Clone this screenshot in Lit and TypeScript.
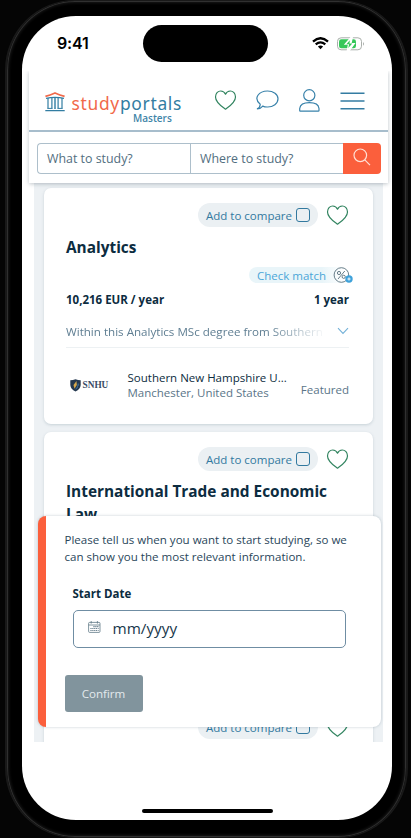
import { LitElement, html, css, svg, nothing } from "lit";
import { customElement, property } from "lit/decorators.js";

const heart = svg`<path d="M11 19.2C8.6 17.4 1 12.6 1 6.9C1 3.4 3.4 1 6.2 1C8.4 1 10.1 2.2 11 4.2C11.9 2.2 13.6 1 15.8 1C18.6 1 21 3.4 21 6.9C21 12.6 13.4 17.4 11 19.2Z" fill="none" stroke="#338561" stroke-width="1.2" stroke-linejoin="round"/>`;

@customElement("course-card")
export class CourseCard extends LitElement {
  @property() name = "";
  @property({ type: Boolean }) full = false;

  static styles = css`
    :host {
      display: block;
      flex: none;
      box-sizing: border-box;
      background: #fff;
      border-radius: 7px;
      padding: 15px 23.5px 0 22.5px;
      box-shadow: 0 1px 3px rgba(70, 100, 120, 0.22);
      font-family: "Open Sans", sans-serif;
      color: #0c2c40;
    }
    svg { display: block; flex: none; }
    .actions { display: flex; justify-content: flex-end; align-items: center; gap: 8px; height: 24px; }
    .compare {
      display: flex; align-items: center; justify-content: space-between; box-sizing: border-box;
      width: 120px; height: 24px; padding: 0 8px; border-radius: 12px;
      background: #ebf0f3; color: #32799f; font-size: 11.5px; line-height: 15px; white-space: nowrap;
    }
    .box { box-sizing: border-box; width: 14px; height: 14px; border: 1px solid #32799f; border-radius: 3px; }
    .title { margin: 9px 0 0; font-size: 15.4px; line-height: 23px; font-weight: 700; width: 280px; }
    .match { display: flex; justify-content: flex-end; height: 16px; margin-top: 8px; margin-right: -4px; }
    .pill {
      display: flex; align-items: center; justify-content: space-between; box-sizing: border-box;
      width: 104px; height: 16px; padding-left: 8px; border-radius: 8px;
      background: linear-gradient(90deg, #e9f5f9 70%, #fff 92%);
      color: #4ba6d8; font-size: 11.5px; line-height: 15px;
    }
    .facts { display: flex; justify-content: space-between; margin-top: 9px; font-size: 11.5px; line-height: 16px; font-weight: 700; }
    .about {
      display: flex; justify-content: space-between; align-items: center; box-sizing: border-box;
      height: 40px; padding-top: 7px;
      border-bottom: 1px solid #edf1f3; color: #5f7e92; font-size: 11.6px;
    }
    .summary {
      width: 258px; overflow: hidden; white-space: nowrap;
      -webkit-mask-image: linear-gradient(90deg, #000 78%, transparent 101%);
      mask-image: linear-gradient(90deg, #000 78%, transparent 101%);
    }
    .school { display: flex; align-items: center; margin-top: 21px; height: 32px; font-size: 11.5px; line-height: 15px; white-space: nowrap; }
    .logo { display: flex; align-items: center; gap: 2px; width: 58.5px; padding-left: 3.5px; box-sizing: border-box; font: 700 9.3px "Liberation Serif", serif; color: #394b65; }
    .where { flex: 1; padding-left: 3px; }
    .city, .tag { color: #5a7588; }
    .tag { padding-top: 8px; }
  `;

  render() {
    return html`
      <div class="actions">
        <div class="compare"><span>Add to compare</span><span class="box"></span></div>
        <svg width="23" height="21" viewBox="-0.5 0 23 21">${heart}</svg>
      </div>
      <h2 class="title">${this.name}</h2>
      ${this.full ? this.details() : nothing}
    `;
  }

  details() {
    return html`
      <div class="match">
        <div class="pill">
          <span>Check match</span>
          <svg width="20" height="16" viewBox="0 0 20 16" fill="none">
            <circle cx="8.4" cy="8" r="7.3" stroke="#566f7c" stroke-width="0.9" />
            <g stroke="#566f7c" stroke-width="0.9"><circle cx="6" cy="6" r="1.6" /><circle cx="10.7" cy="9.8" r="1.6" /><path d="M11.8 4L5 12" /></g>
            <circle cx="16" cy="12" r="3.7" fill="#3fa2da" />
            <path d="M16 10.4v3.2M14.4 12h3.2" stroke="#fff" stroke-width="0.9" />
          </svg>
        </div>
      </div>
      <div class="facts"><span>10,216 EUR / year</span><span>1 year</span></div>
      <div class="about">
        <div class="summary">Within this Analytics MSc degree from Southern</div>
        <svg width="12" height="8" viewBox="0 0 12 8"><path d="M1 1.2L6 6.4L11 1.2" fill="none" stroke="#73b1d8" stroke-width="1.1" /></svg>
      </div>
      <div class="school">
        <div class="logo">
          <svg width="11" height="13" viewBox="0 0 11 13">
            <path d="M0.3 1.2Q3 1.2 5.5 0.2Q8 1.2 10.7 1.2V6Q10.4 10 5.5 12.6Q0.6 10 0.3 6Z" fill="#24384f" />
            <path d="M6.5 2L3.5 6L4.5 9.8L6.8 6Z" fill="#d5a84c" /><path d="M8 3.5L7.5 7.5L5 10.8Q7.8 9.5 8.6 6Z" fill="#4f93c8" />
          </svg>
          <span>SNHU</span>
        </div>
        <div class="where"><div>Southern New Hampshire U...</div><div class="city">Manchester, United States</div></div>
        <div class="tag">Featured</div>
      </div>
    `;
  }
}

@customElement("start-date-panel")
export class StartDatePanel extends LitElement {
  static styles = css`
    :host {
      display: block; box-sizing: border-box; width: 343px; height: 211px;
      padding: 15px 35px 0 19px; border-left: 8px solid #fb5f3c; border-radius: 8px;
      background: #fff; box-shadow: 0 0 3px rgba(60, 90, 110, 0.3);
      font-family: "Open Sans", sans-serif; font-size: 11.55px; line-height: 17px; color: #29465a;
    }
    .text { width: 300px; white-space: nowrap; }
    .label { margin: 20px 0 0 8px; font-size: 11.5px; font-weight: 700; color: #0c2c40; }
    .field {
      display: flex; align-items: center; gap: 12px; box-sizing: border-box; width: 273px; height: 38px;
      margin: 8px 0 0 8px; padding-left: 14px; border: 1px solid #6f8da3; border-radius: 5px;
      font-size: 15.3px; color: #17364a;
    }
    .field svg { margin-top: -4px; }
    .confirm {
      display: flex; align-items: center; justify-content: center; width: 78px; height: 37px;
      margin-top: 27px; border-radius: 3px; background: #81949d; color: #e3eaed; font-size: 11.6px;
    }
  `;

  render() {
    return html`
      <div class="text">Please tell us when you want to start studying, so we<br />can show you the most relevant information.</div>
      <div class="label">Start Date</div>
      <div class="field">
        <svg width="13" height="12" viewBox="0 0 13 12" fill="none" stroke="#607887" stroke-width="0.8">
          <rect x="0.6" y="1.4" width="11.4" height="10" rx="1" />
          <path d="M0.6 4H12M3.2 0V2.6M9.4 0V2.6" />
          <path d="M5.4 5.6H10.6M2.4 7.5H10.6M2.4 9.5H10.6" stroke-dasharray="1.2 0.7" stroke-width="1.2" />
        </svg>
        <span>mm/yyyy</span>
      </div>
      <div class="confirm">Confirm</div>
    `;
  }
}

@customElement("app-root")
export class AppRoot extends LitElement {
  static styles = css`
    :host {
      display: block; position: relative; box-sizing: border-box; width: 411px; height: 838px;
      overflow: hidden; padding: 0 3px 0 5px; background: #050505; font-family: "Open Sans", sans-serif;
    }
    .phone {
      box-sizing: border-box; height: 838px; padding: 15px 14.5px 16px; border: 1px solid #191919;
      border-width: 1px 2px; border-radius: 70px; background: #000; box-shadow: inset 0 0 0 1px #303030, inset 0 0 3px 2px #181818;
    }
    .screen { position: relative; box-sizing: border-box; height: 804px; overflow: hidden; border-radius: 54px; background: #fff; padding: 0 4px 0 7.5px; }
    svg { display: block; flex: none; }
    .status { display: flex; align-items: center; height: 55px; }
    .clock { width: 113.5px; padding: 0 0 1px 28px; box-sizing: border-box; font: 600 16px Inter, sans-serif; letter-spacing: -0.2px; color: #000; }
    .island { width: 125px; height: 37px; border-radius: 19px; background: #000; }
    .wifi { margin-left: 44px; }
    .battery { margin-left: 8px; }
    .top { position: relative; z-index: 1; box-sizing: border-box; width: 359px; height: 112px; background: #fff; box-shadow: 0 1px 4px rgba(40, 60, 75, 0.3); clip-path: inset(0 -5px -8px -5px); }
    .bar { display: flex; align-items: center; box-sizing: border-box; height: 61px; padding: 0 0 0 16px; border-bottom: 2px solid #a7bdcc; }
    .brand { box-sizing: border-box; width: 169px; padding-top: 17px; display: flex; gap: 6.5px; }
    .name { font: 400 17.4px/18px "Noto Sans", sans-serif; letter-spacing: 0.7px; color: #327da2; }
    .study { color: #f1694a; }
    .sub { padding-left: 61.5px; font-size: 10px; line-height: 12px; font-weight: 600; color: #3f85a8; }
    .building { margin-top: -2px; }
    .speech { margin-left: 19px; }
    .person { margin-left: 20px; }
    .menu { margin-left: 20px; }
    .search { display: flex; margin: 11px 7px 0 8px; height: 31px; font-size: 12.4px; color: #526e80; }
    .input { display: flex; align-items: center; box-sizing: border-box; width: 153px; padding-left: 9px; border: 1px solid #adbfcb; border-right: 0; border-radius: 4px 0 0 4px; }
    .input.second { border-radius: 0; }
    .go { display: flex; flex: 1; align-items: center; justify-content: center; border-radius: 0 4px 4px 0; background: #fb5f3c; padding-bottom: 3px; box-sizing: border-box; }
    .list { display: flex; flex-direction: column; gap: 8px; box-sizing: border-box; width: 349px; height: 559px; margin-left: 5px; padding: 5px 10.5px 0 9.5px; overflow: hidden; background: #edf1f4; }
    .first { height: 236px; }
    .second-card { height: 260px; }
    .third { height: 70px; }
    .panel { position: absolute; left: 16px; top: 499.5px; z-index: 2; }
    .home { position: absolute; left: 120px; bottom: 7px; width: 131px; height: 4px; border-radius: 2px; background: #000; }
  `;

  render() {
    return html`
      <div class="phone">
        <div class="screen">
          <div class="status">
            <div class="clock">9:41</div>
            <div class="island"></div>
            <svg class="wifi" width="17" height="13" viewBox="0 0 17 13" fill="none" stroke="#000">
              <path d="M1 4.6Q8.5 -2.2 16 4.6" stroke-width="2.3" /><path d="M3.7 7.4Q8.5 3.2 13.3 7.4" stroke-width="2.2" />
              <path d="M5.9 9.5Q8.5 7.5 11.1 9.5L8.5 12.3Z" fill="#000" stroke="none" />
            </svg>
            <svg class="battery" width="28" height="14" viewBox="0 0 28 14">
              <rect x="0.5" y="0.8" width="24" height="12" rx="3.6" fill="#fff" stroke="#a9aeaa" />
              <rect x="2" y="2.3" width="17" height="9" rx="2.4" fill="#35c759" />
              <path d="M13.5 0L6.8 7.7H10.8L9.6 14H12.8L18.5 6H14.7L16 0Z" fill="#fff" />
              <path d="M12.8 3.2L9.4 7.2H12.1L11.3 11L15.3 6.5H12.5Z" fill="#35c759" />
              <path d="M26 4.9Q28 6.8 26 8.7Z" fill="#a9aeaa" />
            </svg>
          </div>
          <div class="top">
            <div class="bar">
              <div class="brand">
                <svg class="building" width="20" height="20" viewBox="0 0 20 20" fill="none" stroke="#327da2">
                  <path d="M0.4 4.4Q5 3.2 10 1Q15 3.2 19.6 4.4" stroke="#f1694a" stroke-width="1.7" />
                  <path d="M1 6.4Q10 4.4 19 6.4M0.3 18.6H19.7" stroke-width="1.4" />
                  <path d="M3 6V16.4M6.9 5.6V16.4M13.1 5.6V16.4M17 6V16.4" stroke-width="1.2" /><path d="M10 5.2V16.4" stroke-width="1.4" />
                  <path d="M2.4 16.4H7.5M9.3 16.4H10.7M12.5 16.4H17.6" stroke-width="1" />
                </svg>
                <div>
                  <div class="name"><span class="study">study</span>portals</div>
                  <div class="sub">Masters</div>
                </div>
              </div>
              <svg width="23" height="21" viewBox="-0.5 0 23 21">${heart}</svg>
              <svg class="speech" width="23" height="21" viewBox="0 0 23 21"><path d="M4.2 14.2C-3.2 8 3.2 1 11.5 1C17.5 1 22 4.4 22 8.8C22 13.4 17.3 17.2 11.2 17C9.4 17 8 16.7 6.8 16.1Q4.4 19 1 19Q4.3 17.4 4.2 14.2Z" fill="none" stroke="#3982aa" stroke-width="1.2" /></svg>
              <svg class="person" width="21" height="23" viewBox="0 0 21 23" fill="none" stroke="#3982aa" stroke-width="1.2"><circle cx="10.3" cy="6.3" r="5.6" /><path d="M0.7 21.5V19.5C1.2 15.5 5 13.7 10.3 13.7S19.6 15.5 20 19.5V21.5Q20 22.2 19.2 22.2H1.5Q0.7 22.2 0.7 21.5Z" /></svg>
              <svg class="menu" width="25" height="18" viewBox="0 0 25 18"><path d="M0.5 1.2H24.5M0.5 9H24.5M0.5 16.7H24.5" stroke="#347ca2" stroke-width="1.6" /></svg>
            </div>
            <div class="search">
              <div class="input">What to study?</div>
              <div class="input second">Where to study?</div>
              <div class="go"><svg width="18" height="18" viewBox="0 0 18 18" fill="none" stroke="#ffe0d5" stroke-width="1.2"><circle cx="7.3" cy="7.3" r="6.3" /><path d="M11.8 11.8L17 17.2" /></svg></div>
            </div>
          </div>
          <div class="list">
            <course-card class="first" name="Analytics" full></course-card>
            <course-card class="second-card" name="International Trade and Economic Law"></course-card>
            <course-card class="third"></course-card>
          </div>
          <start-date-panel class="panel"></start-date-panel>
          <div class="home"></div>
        </div>
      </div>
    `;
  }
}
